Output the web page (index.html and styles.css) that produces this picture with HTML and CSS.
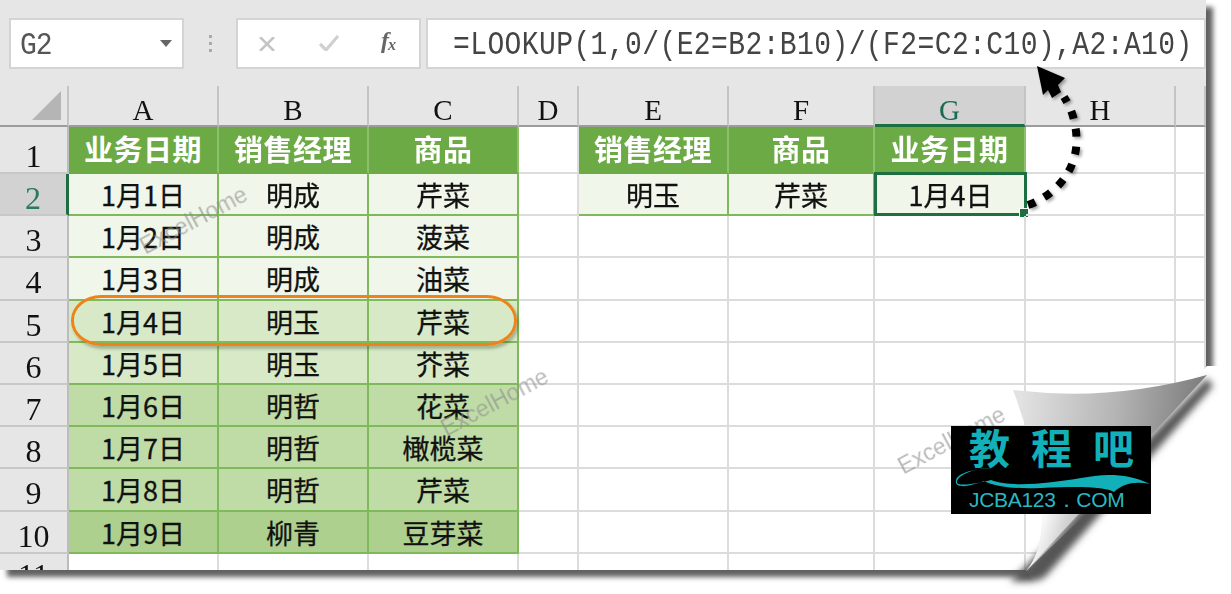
FILE: index.html
```html
<!DOCTYPE html>
<html lang="zh">
<head>
<meta charset="utf-8">
<title>LOOKUP</title>
<link rel="stylesheet" href="styles.css">
</head>
<body>
<div class="page">
  <div class="sheet">
    <div class="formula-bar">
      <div class="name-box"><span>G2</span><i class="caret"></i></div>
      <div class="grip"><i></i><i></i><i></i></div>
      <div class="btn-box">
        <svg class="ico ico-x" width="16" height="14" viewBox="0 0 16 14"><path d="M1 0L15 14M15 0L1 14" stroke="#c4c4c4" stroke-width="2.6" fill="none"/></svg>
        <svg class="ico ico-ok" width="20" height="16" viewBox="0 0 20 16"><path d="M1 9L7 15L19 1" stroke="#d0d0d0" stroke-width="3.2" fill="none"/></svg>
        <span class="fx">f<sub>x</sub></span>
      </div>
      <div class="formula"><span>=LOOKUP(1,0/(E2=B2:B10)/(F2=C2:C10),A2:A10)</span></div>
    </div>
    <div class="grid">
      <div class="ch corner"><i></i></div><div class="ch">A</div><div class="ch">B</div><div class="ch">C</div><div class="ch">D</div><div class="ch">E</div><div class="ch">F</div><div class="ch sel">G</div><div class="ch">H</div><div class="ch"></div>

      <div class="rh r1">1</div><div class="c h">业务日期</div><div class="c h">销售经理</div><div class="c h">商品</div><div class="c"></div><div class="c h">销售经理</div><div class="c h">商品</div><div class="c h">业务日期</div><div class="c"></div><div class="c"></div>

      <div class="rh rsel">2</div><div class="c t1">1月1日</div><div class="c t1">明成</div><div class="c t1">芹菜</div><div class="c"></div><div class="c t1">明玉</div><div class="c t1">芹菜</div><div class="c t1 active">1月4日<i class="handle"></i></div><div class="c"></div><div class="c"></div>

      <div class="rh">3</div><div class="c t1">1月2日</div><div class="c t1">明成</div><div class="c t1">菠菜</div><div class="c"></div><div class="c"></div><div class="c"></div><div class="c"></div><div class="c"></div><div class="c"></div>

      <div class="rh">4</div><div class="c t1">1月3日</div><div class="c t1">明成</div><div class="c t1">油菜</div><div class="c"></div><div class="c"></div><div class="c"></div><div class="c"></div><div class="c"></div><div class="c"></div>

      <div class="rh">5</div><div class="c t2">1月4日</div><div class="c t2">明玉</div><div class="c t2">芹菜</div><div class="c"></div><div class="c"></div><div class="c"></div><div class="c"></div><div class="c"></div><div class="c"></div>

      <div class="rh">6</div><div class="c t2">1月5日</div><div class="c t2">明玉</div><div class="c t2">芥菜</div><div class="c"></div><div class="c"></div><div class="c"></div><div class="c"></div><div class="c"></div><div class="c"></div>

      <div class="rh">7</div><div class="c t3">1月6日</div><div class="c t3">明哲</div><div class="c t3">花菜</div><div class="c"></div><div class="c"></div><div class="c"></div><div class="c"></div><div class="c"></div><div class="c"></div>

      <div class="rh">8</div><div class="c t3">1月7日</div><div class="c t3">明哲</div><div class="c t3">橄榄菜</div><div class="c"></div><div class="c"></div><div class="c"></div><div class="c"></div><div class="c"></div><div class="c"></div>

      <div class="rh">9</div><div class="c t3">1月8日</div><div class="c t3">明哲</div><div class="c t3">芹菜</div><div class="c"></div><div class="c"></div><div class="c"></div><div class="c"></div><div class="c"></div><div class="c"></div>

      <div class="rh">10</div><div class="c t4">1月9日</div><div class="c t4">柳青</div><div class="c t4">豆芽菜</div><div class="c"></div><div class="c"></div><div class="c"></div><div class="c"></div><div class="c"></div><div class="c"></div>

      <div class="rh r11">11</div><div class="c"></div><div class="c"></div><div class="c"></div><div class="c"></div><div class="c"></div><div class="c"></div><div class="c"></div><div class="c"></div><div class="c"></div>
    </div>
  </div>

  <span class="mark m1">ExcelHome</span>
  <span class="mark m2">ExcelHome</span>
  <span class="mark m3">ExcelHome</span>
  <div class="oval"></div>

  <svg class="art" width="1231" height="594" viewBox="0 0 1231 594">
    <defs>
      <linearGradient id="flap" x1="1020" y1="400" x2="1195" y2="420" gradientUnits="userSpaceOnUse">
        <stop offset="0" stop-color="#e2e2e2"/><stop offset="0.55" stop-color="#b4b4b4"/><stop offset="1" stop-color="#808080"/>
      </linearGradient>
      <linearGradient id="fade" x1="1034" y1="530" x2="1075" y2="545" gradientUnits="userSpaceOnUse">
        <stop offset="0" stop-color="#fff"/><stop offset="0.6" stop-color="#fff" stop-opacity=".25"/><stop offset="1" stop-color="#fff" stop-opacity="0"/>
      </linearGradient>
      <filter id="soft" x="-20%" y="-20%" width="140%" height="140%"><feGaussianBlur stdDeviation="3.5"/></filter>
      <filter id="lift" x="-20%" y="-20%" width="140%" height="140%"><feDropShadow dx="2" dy="2" stdDeviation="1.5" flood-color="#000" flood-opacity=".35"/></filter>
    </defs>
    <path d="M1207 366H1231V594H1042L1026 570Z" fill="#fff"/>
    <path d="M1207 378L1213 386L1046 576Q1038 584 1010 581L1026 566Z" fill="#555" filter="url(#soft)"/>
    <path d="M1013 390Q1110 402 1207 375L1026 571Q1044 550 1042 510Q1036 450 1013 390Z" fill="url(#flap)"/>
    <path d="M1040 460L1100 500L1026 571Q1044 550 1042 510Q1040 480 1034 450Z" fill="url(#fade)"/>
    <g filter="url(#lift)">
      <path d="M1028 205C1052 197 1084 170 1075 125C1073 113 1069 105 1064 97" fill="none" stroke="#000" stroke-width="8" stroke-dasharray="8 10"/>
      <path d="M1037 66L1065 78L1058 85L1061 92L1052 98L1048 90L1043 95Z" fill="#000"/>
    </g>
  </svg>

  <div class="logo">
    <div class="logo-title"><span>教</span><span>程</span><span>吧</span></div>
    <svg class="logo-wave" width="200" height="30" viewBox="0 0 200 30"><path d="M40 2C22 2 6 10 6 16C6 21 24 18 40 14C60 22 100 17 130 12C150 8 175 6 199 18C185 15 172 17 163 26C155 21 130 20 90 22C65 23 45 21 33 15C20 20 3 24 5 14C7 7 22 3 40 2Z" fill="#12b0b8"/></svg>
    <div class="logo-url">JCBA123．COM</div>
  </div>
</div>
</body>
</html>
```
FILE: styles.css
```css
* { box-sizing: border-box; }
html, body { margin: 0; padding: 0; background: #fff; }
.page { position: relative; width: 1231px; height: 594px; overflow: hidden; }

.sheet {
  width: 1206px; height: 570px; display: flex; flex-direction: column;
  background: #fff; box-shadow: 7px 7px 5px rgba(0,0,0,.62);
  overflow: hidden; filter: blur(.4px);
}

.formula-bar {
  height: 86px; flex: none; display: flex; align-items: flex-start;
  background: #e6e6e6; padding: 18px 0 0 9px;
}
.name-box, .btn-box, .formula {
  height: 51px; background: #fff; border: 2px solid #d4d4d4;
}
.name-box {
  width: 175px; display: flex; align-items: center; justify-content: space-between;
  padding: 3px 9px 0 9px; font: 28px "Liberation Mono", monospace; color: #555;
}
.name-box span { transform: scaleY(1.15); letter-spacing: -1px; }
.caret { width: 0; height: 0; border: 6px solid transparent; border-top: 7px solid #666; border-bottom: 0; margin: -3px 1px 0 0; }
.grip { width: 52px; height: 51px; display: flex; flex-direction: column; align-items: center; justify-content: center; gap: 4px; }
.grip i { width: 3px; height: 3px; background: #aaa; }
.btn-box { width: 185px; display: flex; align-items: center; padding: 0 0 0 21px; }
.ico { flex: none; }
.ico-x { margin-right: 44px; }
.ico-ok { margin: -2px 42px 0 0; }
.fx { font: italic 700 24px "Liberation Serif", serif; color: #666; margin-top: -6px; }
.fx sub { font-size: 16px; vertical-align: -2px; line-height: 0; margin-left: -1px; }
.formula {
  width: 780px; margin-left: 5px; padding-left: 25px; font: 28px/47px "Liberation Mono", monospace; color: #444;
  letter-spacing: .4px; white-space: nowrap; overflow: hidden;
}
.formula span { display: inline-block; transform: scaleY(1.18) translateY(1px); }

.grid {
  flex: none; display: grid;
  grid-template-columns: 69px 150px 150px 150px 60px 150px 146px 151px 150px 30px;
  grid-template-rows: 41px 47px 42px 42px 43px 42px 42px 42px 42px 43px 42px;
}
.ch, .rh {
  display: flex; align-items: center; justify-content: center;
  background: #e6e6e6; font-family: "Liberation Serif", serif; color: #111;
  overflow: hidden;
}
.ch { font-size: 29px; border-right: 2px solid #c4c4c4; border-bottom: 2px solid #9c9c9c; padding-top: 10px; }
.corner { justify-content: flex-end; align-items: flex-end; padding: 0 6px 5px 0; }
.corner i { width: 0; height: 0; border-left: 29px solid transparent; border-bottom: 29px solid #b5b5b5; }
.sel { background: #d2d2d2; color: #1c6a55; border-bottom: 3px solid #1d6f42; }
.rh { font-size: 32px; border-right: 2px solid #bcbcbc; border-bottom: 2px solid #c8c8c8; padding-top: 8px; }
.r1 { padding-top: 14px; }
.r11 { padding-top: 3px; }
.rsel { background: #d2d2d2; color: #2a7a5c; border-right: 3px solid #1d6f42; }

.c {
  position: relative; display: flex; align-items: center; justify-content: center;
  border-right: 2px solid #dcdcdc; border-bottom: 2px solid #dcdcdc;
  font: 27px "Noto Sans CJK SC", sans-serif; color: #111; white-space: nowrap;
  -webkit-text-stroke: .3px #111;
}
.h { background: #6caa45; color: #fff; font-weight: 700; font-size: 29px; letter-spacing: .5px; border-color: #8cc06a; -webkit-text-stroke: 0; border-bottom-color: #6caa45; padding-bottom: 4px; }
.t1, .t2, .t3, .t4 { border-color: #7fb95c; }
.t1 { background: #f0f7ea; }
.t2 { background: #d8e9c8; }
.t3 { background: #c0dca6; }
.t4 { background: #aed08e; }
.active { border: 3px solid #1d6f42; margin: -2px -1px 0 -1px; }
.handle { position: absolute; right: -5px; bottom: -5px; width: 8px; height: 8px; background: #1d6f42; border: 1px solid #fff; box-sizing: content-box; }

.mark {
  position: absolute; font: 23px "Liberation Sans", sans-serif; color: rgba(140,140,140,.6);
  transform: rotate(-28deg); white-space: nowrap;
}
.m1 { left: 135px; top: 207px; }
.m2 { left: 436px; top: 389px; }
.m3 { left: 893px; top: 427px; }

.oval {
  position: absolute; left: 71px; top: 295px; width: 446px; height: 51px;
  border: 3px solid #ee8419; border-radius: 30px / 25px;
  box-shadow: 2px 3px 3px rgba(60,80,40,.35);
}
.art { position: absolute; left: 0; top: 0; }

.logo { position: absolute; left: 951px; top: 426px; width: 200px; height: 88px; background: #000; overflow: hidden; }
.logo-title {
  position: absolute; left: 18px; top: -2px; display: flex; gap: 21px;
  font: 700 41px/44px "Noto Sans CJK SC", sans-serif; color: #12b0b8;
}
.logo-wave { position: absolute; left: 0; top: 40px; }
.logo-url {
  position: absolute; left: 18px; top: 62px; width: 180px; white-space: nowrap;
  font: 21px/24px "Liberation Sans", sans-serif; color: #2ab8c0; letter-spacing: -.3px;
}
```
